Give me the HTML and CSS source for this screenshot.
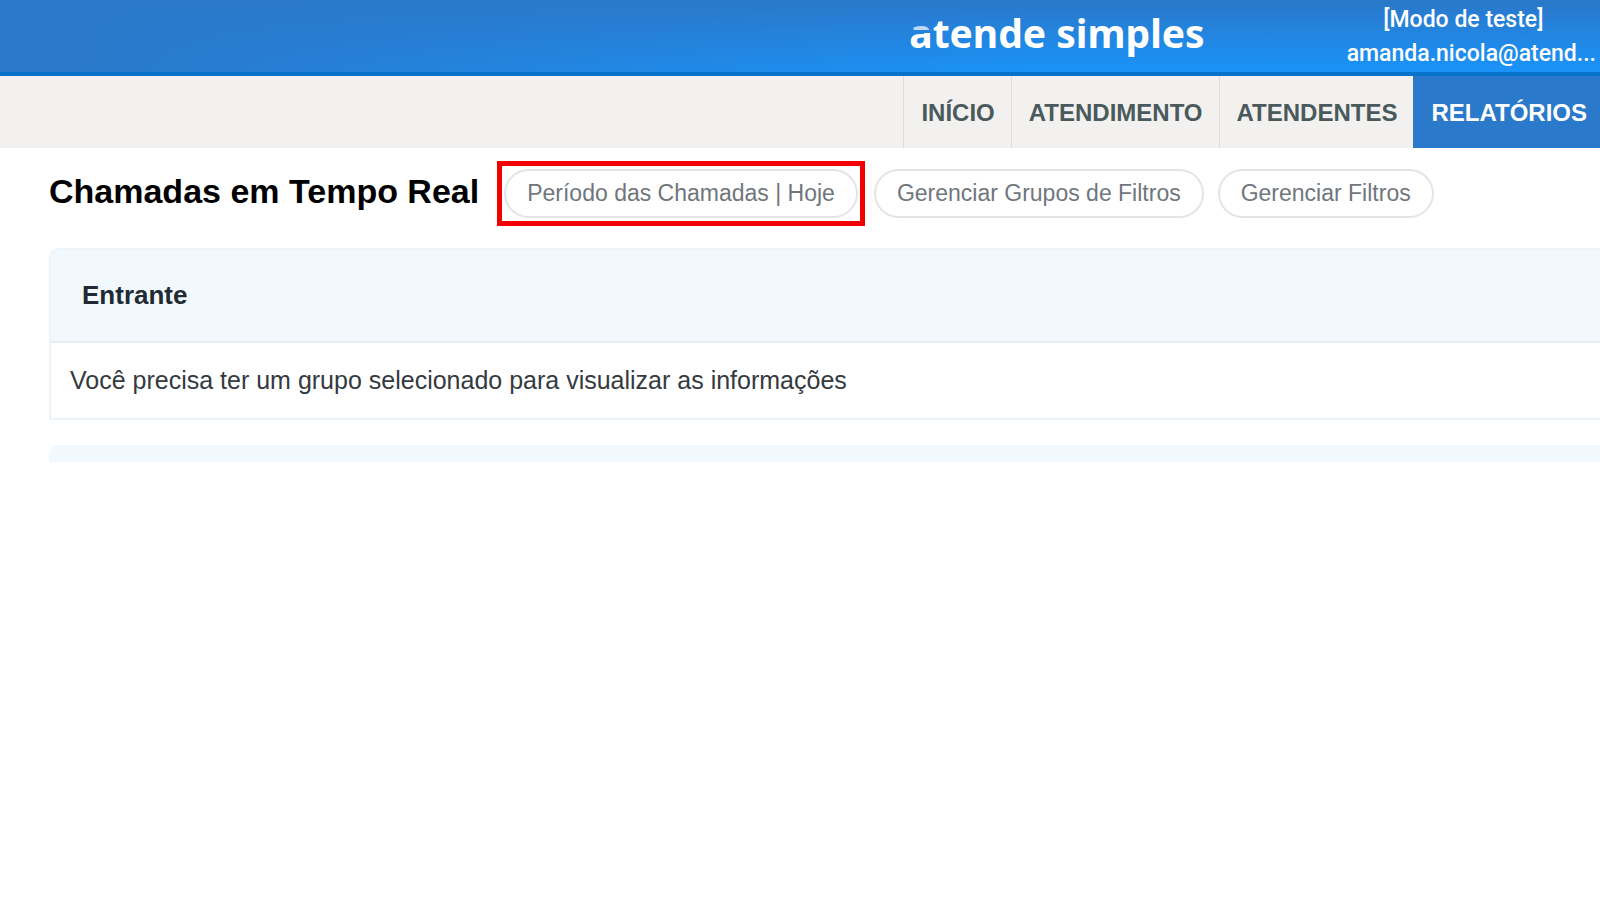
FILE: index.html
```html
<!DOCTYPE html>
<html lang="pt-BR">
<head>
<meta charset="utf-8">
<meta name="viewport" content="width=device-width, initial-scale=1">
<title>Chamadas em Tempo Real</title>
<link rel="stylesheet" href="styles.css">
</head>
<body>
<header class="topbar">
  <div class="logo"><span class="logo-initial">a</span>tende simples</div>
  <div class="account">
    <span class="account-mode">[Modo de teste]</span>
    <span class="account-email">amanda.nicola@atend...</span>
  </div>
</header>
<nav class="menu">
  <a class="menu-item" href="#">INÍCIO</a>
  <a class="menu-item" href="#">ATENDIMENTO</a>
  <a class="menu-item" href="#">ATENDENTES</a>
  <a class="menu-item menu-item-active" href="#" aria-current="page">RELATÓRIOS</a>
</nav>
<main class="content">
  <div class="heading">
    <h1 class="title">Chamadas em Tempo Real</h1>
    <div class="highlight"><button class="pill" type="button">Período das Chamadas | Hoje</button></div>
    <div class="actions">
      <button class="pill" type="button">Gerenciar Grupos de Filtros</button>
      <button class="pill" type="button">Gerenciar Filtros</button>
    </div>
  </div>
  <section class="panel">
    <h2 class="panel-title">Entrante</h2>
    <p class="panel-text">Você precisa ter um grupo selecionado para visualizar as informações</p>
  </section>
  <div class="panel-edge"></div>
</main>
</body>
</html>
```
FILE: styles.css
```css
* { box-sizing: border-box; }

body {
  margin: 0;
  background: #fff;
  color: #343a40;
  font-family: "Liberation Sans", Arial, sans-serif;
  font-size: 25px;
}

.topbar {
  display: flex;
  justify-content: flex-end;
  height: 76px;
  border-bottom: 4px solid #0873cb;
  background:
    linear-gradient(90deg, #2a79cb 5%, rgba(42, 121, 203, 0) 65%),
    linear-gradient(180deg, #2a79cb 5%, #1a92f7 95%);
  color: #fff;
}

.logo {
  padding-top: 6px;
  margin-right: 142px;
  font-family: "Noto Sans", sans-serif;
  font-size: 39px;
  font-weight: 700;
  line-height: 54px;
}

.logo-initial { position: relative; }

/* Fades the roof of the first letter and cuts it from the bowl. */
.logo-initial::after {
  content: "";
  position: absolute;
  left: 0;
  top: 17px;
  width: 22px;
  height: 10px;
  background: linear-gradient(rgba(36, 130, 222, 0.3) 7px, #2484de 7px);
}

.account {
  display: flex;
  flex-direction: column;
  align-items: center;
  padding-top: 3px;
  padding-right: 4px;
  font-family: Roboto, sans-serif;
  font-size: 23px;
  font-weight: 500;
  line-height: 34px;
}

.account-mode { padding-right: 16px; }

.menu {
  display: flex;
  justify-content: flex-end;
  background: #f2f1ef;
}

.menu-item {
  padding: 2px 16px 0 17px;
  border-left: 1px solid #dddcda;
  color: #4a5a5c;
  font-size: 24px;
  font-weight: 700;
  line-height: 70px;
  text-decoration: none;
}

.menu-item-active {
  padding-right: 13px;
  border-color: #2a79cb;
  background: #2a79cb;
  color: #fff;
}

.content { padding: 13px 0 0 49px; }

.heading {
  display: flex;
  align-items: flex-start;
}

.title {
  margin: 0 18px 0 0;
  color: #000;
  font-size: 34px;
  font-weight: 700;
  line-height: 60px;
}

.highlight {
  padding: 3px 2px;
  border: 5px solid #f40000;
}

.actions {
  display: flex;
  gap: 14px;
  padding-top: 8px;
  margin-left: 9px;
}

.pill {
  display: block;
  height: 49px;
  padding: 0 21px;
  border: 2px solid #e3e4e5;
  border-radius: 25px;
  background: #fff;
  color: #70767c;
  font-family: inherit;
  font-size: 23px;
}

.panel {
  margin-top: 22px;
  border: 2px solid #edf4f9;
  border-right: 0;
  border-radius: 10px 0 0 0;
}

.panel-title {
  margin: 0;
  padding: 0 31px;
  border-bottom: 2px solid #e4eff5;
  border-radius: 8px 0 0 0;
  background: #f1f8fe;
  color: #212a33;
  font-size: 26px;
  font-weight: 700;
  line-height: 91px;
}

.panel-text {
  margin: 0;
  padding: 0 19px;
  line-height: 75px;
}

.panel-edge {
  height: 17px;
  margin-top: 25px;
  border-radius: 10px 0 0 0;
  background: #f1f8fe;
}
```
